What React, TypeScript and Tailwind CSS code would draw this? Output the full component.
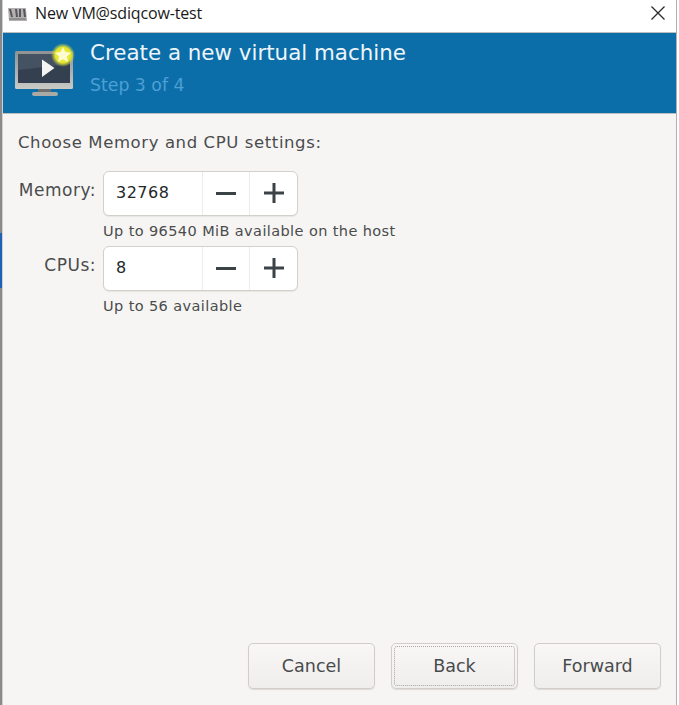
const font = "font-['DejaVu_Sans',sans-serif]";

function MonitorIcon() {
  return (
    <svg width="64" height="56" viewBox="0 0 64 56">
      <defs>
        <radialGradient id="glow">
          <stop offset="0%" stopColor="#f4f23c" />
          <stop offset="65%" stopColor="#e6e52c" />
          <stop offset="100%" stopColor="#c6d24a" stopOpacity="0" />
        </radialGradient>
        <linearGradient id="bezel" x1="0" y1="0" x2="0" y2="1">
          <stop offset="0%" stopColor="#8f9192" />
          <stop offset="100%" stopColor="#c9c9c6" />
        </linearGradient>
      </defs>
      <rect x="0" y="8" width="58" height="38" rx="1.5" fill="url(#bezel)" />
      <rect x="3" y="11" width="52" height="29" fill="#34404f" />
      <path d="M3 11h52v10L3 27z" fill="#455261" />
      <path d="M27 16.5l12.5 8.5L27 34z" fill="#f4f4f2" />
      <rect x="23" y="46" width="13" height="4" fill="#6f6f6f" />
      <rect x="17" y="49" width="26" height="4" rx="2" fill="#a9a9a6" />
      <circle cx="48" cy="12" r="12" fill="url(#glow)" />
      <path
        d="M48 4l2.4 5 5.6.7-4.1 3.8 1.1 5.5-5-2.7-5 2.7 1.1-5.5-4.1-3.8 5.6-.7z"
        fill="#fdfbd2"
      />
    </svg>
  );
}

function SmallVmIcon() {
  return (
    <svg className="ml-[5px] mt-[8px]" width="19" height="13" viewBox="0 0 19 13">
      <path d="M0 0h18l1 13H1z" fill="#b4b0b2" />
      <path d="M1 1h2l2 8H3zM7 1h2l1 8H8zM11 1h2v8h-2zM15 1h2l1 8h-2z" fill="#55555a" />
      <rect x="1" y="10" width="17" height="2" fill="#8e8e8e" />
    </svg>
  );
}

function SpinRow({ label, value, hint }: { label: string; value: string; hint: string }) {
  return (
    <div className="flex items-start">
      <div className="w-[78px] pt-[9px] text-right text-[17px] leading-5 tracking-[0.5px] text-[#4a4c4c]">
        {label}
      </div>
      <div className="ml-[7px] flex flex-col">
        <div className="flex h-[45px] w-[195px] rounded-[6px] border border-[#d3cfca] bg-white shadow-[0_1px_1px_#e8e5e1]">
          <div className="flex w-[98px] items-center pb-[1px] pl-[12px] text-[16px] tracking-[0.5px] text-[#22282a]">
            {value}
          </div>
          <div className="flex w-[47px] items-center justify-center border-l border-[#eeecea] pb-[1px]">
            <div className="h-[3px] w-[20px] bg-[#3c4347]" />
          </div>
          <div className="flex flex-1 items-center justify-center border-l border-[#eeecea] pb-[1px]">
            <svg width="20" height="20" viewBox="0 0 20 20" fill="#3c4347">
              <rect x="0" y="8.5" width="20" height="3" />
              <rect x="8.5" y="0" width="3" height="20" />
            </svg>
          </div>
        </div>
        <div className="mt-[5px] text-[14.5px] leading-[20px] tracking-[0.4px] text-[#4a4c4c]">{hint}</div>
      </div>
    </div>
  );
}

function FooterButton({ text, focused }: { text: string; focused?: boolean }) {
  return (
    <div className="flex h-[46px] w-[127px] items-center justify-center rounded-[5px] border border-[#d2cdc8] bg-gradient-to-b from-[#f8f7f6] to-[#f0eeec] p-[2px] shadow-[0_1px_1px_#dcd9d5]">
      <div
        className={
          focused
            ? "flex h-full w-full items-center justify-center rounded-[3px] border border-dotted border-[#a8a8a8] text-[17.5px] text-[#484b4c]"
            : "flex h-full w-full items-center justify-center text-[17.5px] text-[#484b4c]"
        }
      >
        {text}
      </div>
    </div>
  );
}

export default function App() {
  return (
    <div className={`flex h-[705px] w-[679px] overflow-hidden bg-white ${font}`}>
      {/* sliver of the window behind */}
      <div className="flex w-[3px] shrink-0 flex-col">
        <div className="h-[233px] border-r border-[#d0d0d0] bg-[#8a8a8a]" />
        <div className="h-[55px] border-r border-[#d0d0d0] bg-[#1f62b5]" />
        <div className="flex-1 border-r border-[#d0d0d0] bg-[#8a8a8a]" />
      </div>

      <div className="flex min-w-0 flex-1 flex-col">
        <div className="flex h-[32px] shrink-0 items-start bg-white">
          <SmallVmIcon />
          <div className="ml-[8px] mt-[2px] font-['Open_Sans',sans-serif] text-[16px] leading-[22px] tracking-[-0.15px] text-[#1a1a1a]">
            New VM@sdiqcow-test
          </div>
          <svg className="ml-auto mr-[10px] mt-[5px]" width="16" height="16" viewBox="0 0 16 16" stroke="#2a2a2a" strokeWidth="1.3" fill="none">
            <path d="M1.5 1.5l13 13M14.5 1.5l-13 13" />
          </svg>
        </div>

        <div className="flex h-[82px] shrink-0 items-start border-y border-[#bdbdbb] bg-[#0b6ea8] pl-[12px] pr-[2px]">
          <div className="mt-[10px]">
            <MonitorIcon />
          </div>
          <div className="ml-[11px] flex flex-col">
            <div className="mt-[5px] text-[21.4px] leading-[30px] text-[#eef5fa]">Create a new virtual machine</div>
            <div className="mt-[6px] text-[17.3px] leading-[22px] text-[#4d9fd6]">Step 3 of 4</div>
          </div>
        </div>

        <div className="flex min-h-0 flex-1 flex-col bg-[#f6f5f4] pl-[15px]">
          <div className="mt-[18px] text-[16.5px] leading-[22px] tracking-[0.6px] text-[#4a4c4c]">
            Choose Memory and CPU settings:
          </div>
          <div className="mt-[17px] flex flex-col">
            <SpinRow label="Memory:" value="32768" hint="Up to 96540 MiB available on the host" />
            <div className="mt-[5px]">
              <SpinRow label="CPUs:" value="8" hint="Up to 56 available" />
            </div>
          </div>
          <div className="mb-[16px] mr-[15px] mt-auto flex justify-end gap-[16px]">
            <FooterButton text="Cancel" />
            <FooterButton text="Back" focused />
            <FooterButton text="Forward" />
          </div>
        </div>
      </div>

      <div className="w-[3px] shrink-0 border-l border-[#b0b0b0] bg-white" />
    </div>
  );
}
